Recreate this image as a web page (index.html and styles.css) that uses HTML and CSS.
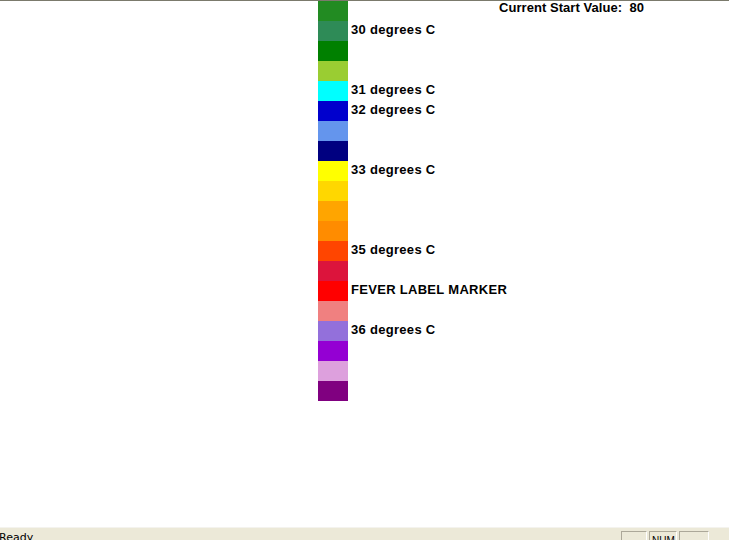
FILE: index.html
```html
<!DOCTYPE html>
<html>
<head>
<meta charset="utf-8">
<link rel="stylesheet" href="styles.css">
</head>
<body>
<div class="frame">
  <div class="view">
    <div class="legend">
      <div class="row"><span class="sw" style="background:#228B22"></span></div>
      <div class="row"><span class="sw" style="background:#2E8B57"></span><span class="lbl">30 degrees C</span></div>
      <div class="row"><span class="sw" style="background:#008000"></span></div>
      <div class="row"><span class="sw" style="background:#9ACD32"></span></div>
      <div class="row"><span class="sw" style="background:#00FFFF"></span><span class="lbl">31 degrees C</span></div>
      <div class="row"><span class="sw" style="background:#0000CD"></span><span class="lbl">32 degrees C</span></div>
      <div class="row"><span class="sw" style="background:#6495ED"></span></div>
      <div class="row"><span class="sw" style="background:#000080"></span></div>
      <div class="row"><span class="sw" style="background:#FFFF00"></span><span class="lbl">33 degrees C</span></div>
      <div class="row"><span class="sw" style="background:#FFD700"></span></div>
      <div class="row"><span class="sw" style="background:#FFA500"></span></div>
      <div class="row"><span class="sw" style="background:#FF8C00"></span></div>
      <div class="row"><span class="sw" style="background:#FF4500"></span><span class="lbl">35 degrees C</span></div>
      <div class="row"><span class="sw" style="background:#DC143C"></span></div>
      <div class="row"><span class="sw" style="background:#FF0000"></span><span class="lbl">FEVER LABEL MARKER</span></div>
      <div class="row"><span class="sw" style="background:#F08080"></span></div>
      <div class="row"><span class="sw" style="background:#9370DB"></span><span class="lbl">36 degrees C</span></div>
      <div class="row"><span class="sw" style="background:#9400D3"></span></div>
      <div class="row"><span class="sw" style="background:#DDA0DD"></span></div>
      <div class="row"><span class="sw" style="background:#800080"></span></div>
    </div>
    <div class="current">Current Start Value:&nbsp; 80</div>
  </div>
  <div class="status">
    <div class="ready">Ready</div>
    <div class="panes">
      <div class="pane p1"></div>
      <div class="pane p2">NUM</div>
      <div class="pane p3"></div>
      <div class="grip"></div>
    </div>
  </div>
</div>
</body>
</html>
```

FILE: styles.css
```css
html, body {
  margin: 0;
  padding: 0;
  background: #ffffff;
}
body {
  width: 729px;
  height: 540px;
  overflow: hidden;
}
.frame {
  display: flex;
  flex-direction: column;
  height: 540px;
  border-top: 1px solid #7b7a6c;
  box-sizing: border-box;
}
.view {
  flex: 0 0 526px;
  display: flex;
  padding-left: 318px;
  background: #ffffff;
}
.legend {
  width: 181px;
  flex: none;
  display: flex;
  flex-direction: column;
}
.row {
  display: flex;
  align-items: flex-start;
  height: 20px;
}
.sw {
  display: block;
  width: 30px;
  height: 20px;
  flex: none;
}
.lbl {
  margin-left: 3px;
  font-family: "Liberation Sans", Arial, sans-serif;
  font-weight: bold;
  font-size: 13px;
  line-height: 18px;
  letter-spacing: 0.3px;
  color: #000000;
  white-space: nowrap;
}
.current {
  font-family: "Liberation Sans", Arial, sans-serif;
  font-weight: bold;
  font-size: 13px;
  line-height: 14px;
  letter-spacing: 0.05px;
  color: #000000;
  white-space: pre;
}
.status {
  flex: 1;
  display: flex;
  justify-content: space-between;
  border-top: 1px solid #f4f3ee;
  background: #ece9d8;
  font-family: "DejaVu Sans", Tahoma, sans-serif;
  font-size: 11px;
  color: #000000;
}
.ready {
  margin-left: -1px;
  padding-top: 3px;
  line-height: 13px;
}
.panes {
  display: flex;
  gap: 2px;
  padding-top: 3px;
}
.pane {
  flex: none;
  height: 18px;
  box-sizing: border-box;
  overflow: hidden;
  white-space: nowrap;
  border-top: 1px solid #aca899;
  border-left: 1px solid #aca899;
  border-right: 1px solid #ffffff;
  border-bottom: 1px solid #ffffff;
  padding: 2px 0 0 2px;
  font-family: "Liberation Sans", Arial, sans-serif;
  font-size: 10px;
  line-height: 13px;
}
.p1 { width: 26px; }
.p2 { width: 28px; }
.p3 { width: 30px; }
.grip {
  flex: none;
  width: 18px;
}
```
